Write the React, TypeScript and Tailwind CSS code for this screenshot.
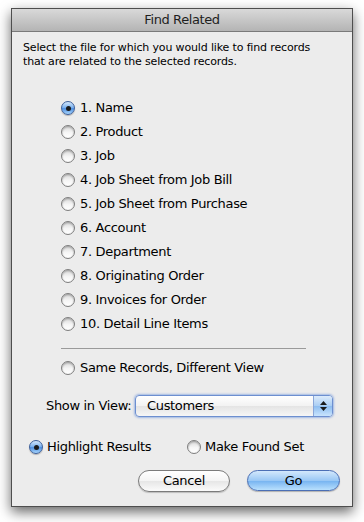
import React from "react";

const font = { fontFamily: '"DejaVu Sans", "Liberation Sans", sans-serif' };

function Radio({ checked }: { checked?: boolean }) {
  if (checked) {
    return (
      <span className="w-[14px] h-[14px] shrink-0 rounded-full border border-[#3d5f9a] bg-[linear-gradient(#d4e8fc,#7fb3ee_45%,#4f8fe0_55%,#a8d6fd)] flex items-center justify-center shadow-[0_1px_1px_rgba(0,0,0,0.25)]">
        <span className="w-[5px] h-[5px] rounded-full bg-[#1a1a1a]" />
      </span>
    );
  }
  return (
    <span className="w-[14px] h-[14px] shrink-0 rounded-full border border-[#7e7e7e] bg-[linear-gradient(#d8d8d8,#f6f6f6_55%,#ffffff)] shadow-[inset_0_1px_2px_rgba(0,0,0,0.3)]" />
  );
}

const items = [
  "1. Name",
  "2. Product",
  "3. Job",
  "4. Job Sheet from Job Bill",
  "5. Job Sheet from Purchase",
  "6. Account",
  "7. Department",
  "8. Originating Order",
  "9. Invoices for Order",
  "10. Detail Line Items",
];

export default function App() {
  return (
    <div
      className="w-[364px] h-[522px] bg-white pl-[11px] pt-[8px] text-black"
      style={font}
    >
      <div className="w-[342px] h-[499px] border border-[#4e4e4e] bg-[#ececec] shadow-[0_5px_12px_rgba(0,0,0,0.6)] flex flex-col">
        {/* Title bar */}
        <div className="h-[23px] shrink-0 bg-[linear-gradient(#d9d9d9,#b4b4b4)] border-b border-[#7a7a7a] flex items-center justify-center text-[13px] tracking-[-0.4px] text-[#1e1e1e]">
          Find Related
        </div>

        {/* Instruction text */}
        <div className="mt-[9px] pl-[11px] text-[11px] leading-[14px] tracking-[-0.15px]">
          <div>Select the file for which you would like to find records</div>
          <div>that are related to the selected records.</div>
        </div>

        {/* Radio list */}
        <div className="mt-[27px] pl-[49px] flex flex-col text-[13px] tracking-[-0.33px]">
          {items.map((t, i) => (
            <div key={t} className="h-[24px] flex items-center gap-[5px]">
              <Radio checked={i === 0} />
              <span>{t}</span>
            </div>
          ))}
        </div>

        {/* Separator */}
        <div className="mt-[12px] ml-[49px] w-[245px] h-px bg-[#9a9a9a]" />

        <div className="mt-[7px] pl-[49px] h-[24px] flex items-center gap-[5px] text-[13px] tracking-[-0.33px]">
          <Radio />
          <span>Same Records, Different View</span>
        </div>

        {/* Show in View */}
        <div className="mt-[14px] h-[24px] flex items-center text-[13px] tracking-[-0.33px]">
          <span className="ml-[34px] w-[89px]">Show in View:</span>
          <div className="w-[198px] h-[22px] rounded-[4px] border border-[#6d8fd0] shadow-[0_0_2px_1px_rgba(110,150,220,0.6)] bg-[linear-gradient(#ffffff,#f2f2f2_50%,#e4e4e4_51%,#f6f6f6)] flex items-stretch overflow-hidden">
            <span className="flex-1 flex items-center pl-[11px]">Customers</span>
            <span className="w-[19px] border-l border-[#8aa6d8] bg-[linear-gradient(#dcebfb,#a9cdf3_50%,#8dbdf0_51%,#c9e4fd)] flex flex-col items-center justify-center gap-[2px]">
              <svg width="7" height="4" viewBox="0 0 7 4">
                <path d="M3.5 0 L7 4 L0 4 Z" fill="#1a1a1a" />
              </svg>
              <svg width="7" height="4" viewBox="0 0 7 4">
                <path d="M0 0 L7 0 L3.5 4 Z" fill="#1a1a1a" />
              </svg>
            </span>
          </div>
        </div>

        {/* Highlight / Found set */}
        <div className="mt-[17px] h-[24px] flex items-center text-[13px] tracking-[-0.33px]">
          <div className="ml-[17px] flex items-center gap-[4px] w-[158px]">
            <Radio checked />
            <span>Highlight Results</span>
          </div>
          <div className="flex items-center gap-[4px]">
            <Radio />
            <span>Make Found Set</span>
          </div>
        </div>

        {/* Buttons */}
        <div className="mt-[11px] flex justify-end items-center gap-[17px] pr-[12px] text-[13px] tracking-[-0.33px]">
          <button className="w-[92px] h-[22px] rounded-full border border-[#7b7b7b] bg-[linear-gradient(#ffffff,#f4f4f4_50%,#e6e6e6_51%,#fbfbfb)] shadow-[0_1px_1px_rgba(0,0,0,0.2)] flex items-center justify-center">
            Cancel
          </button>
          <button className="w-[93px] h-[21px] -mt-[1px] rounded-full border border-[#4b6fb5] bg-[linear-gradient(#d3e8fc,#9ac8f5_50%,#74b2f0_51%,#b9e0fd)] shadow-[0_1px_1px_rgba(0,0,0,0.25)] flex items-center justify-center">
            Go
          </button>
        </div>
      </div>
    </div>
  );
}
